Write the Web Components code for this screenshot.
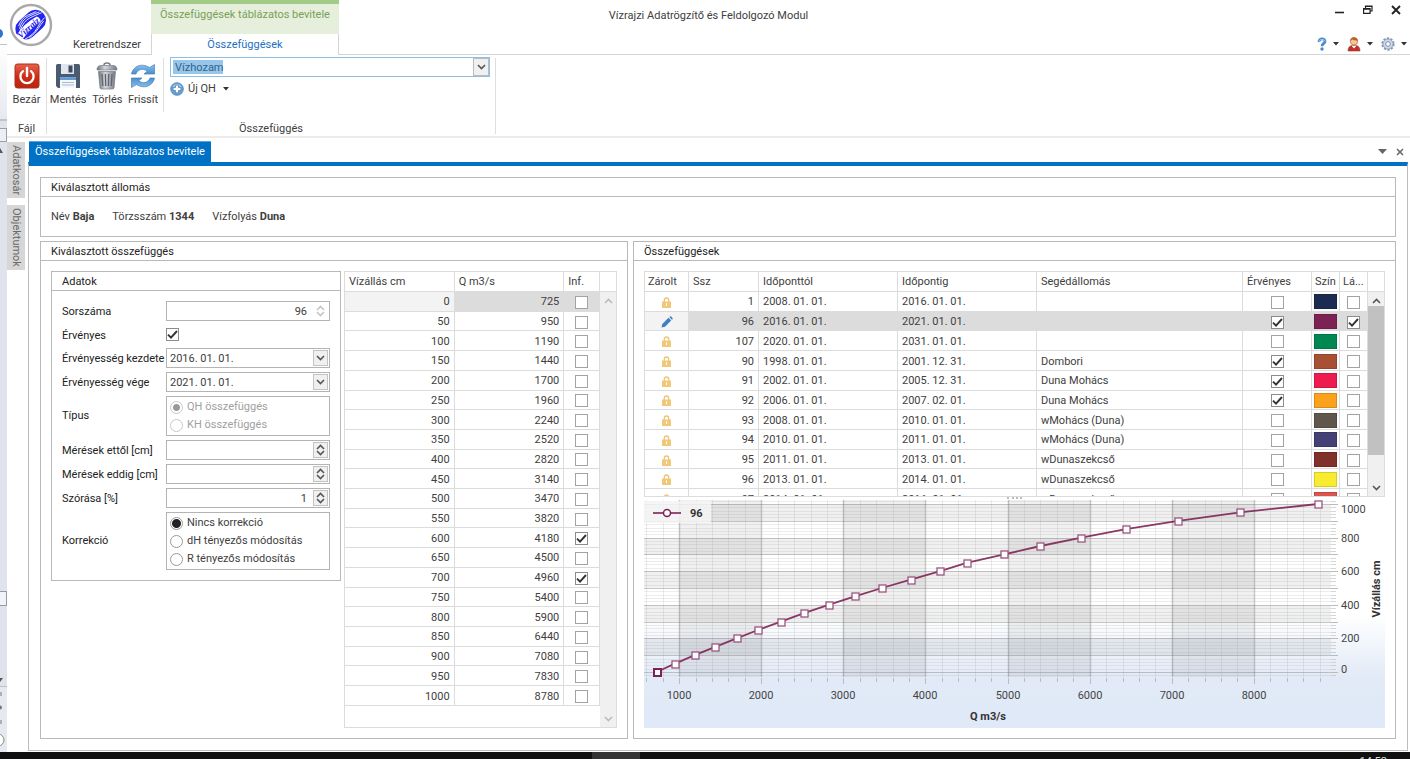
<!DOCTYPE html>
<html lang="hu">
<head>
<meta charset="utf-8">
<title>Vízrajzi Adatrögzítő és Feldolgozó Modul</title>
<style>
  html, body { margin: 0; background: #fff; }
  body { font: 11px/16px Roboto, "Open Sans", sans-serif; color: #404040; }
</style>
</head>
<body>
<app-window></app-window>

<script>
const BASE = `
  *, *::before, *::after { box-sizing: border-box; }
  button, input, select { font: inherit; color: inherit; margin: 0; }
  button { border: 0; background: none; padding: 0; cursor: default; }
  svg { display: block; flex: none; }
  input[type=checkbox] { appearance: none; width: 13px; height: 13px; border: 1px solid #a3a3a3; background: #fff center/11px 11px no-repeat; display: block; }
  input[type=checkbox]:checked { border-color: #8c8c8c; background-image: url("data:image/svg+xml,%3Csvg xmlns='http://www.w3.org/2000/svg' viewBox='0 0 11 11'%3E%3Cpath d='M1 5.6 4 8.6 10 2' fill='none' stroke='%23333' stroke-width='1.9'/%3E%3C/svg%3E"); }
`;
function define(name, css, html, setup) {
  customElements.define(name, class extends HTMLElement {
    constructor() {
      super();
      const root = this.attachShadow({ mode: "open" });
      root.innerHTML = `<style>${BASE}${css}</style>${typeof html === "function" ? html(this) : html}`;
    }
    connectedCallback() { if (setup) setup(this, this.shadowRoot); }
  });
}
const chevron = (dir, color = "#555") =>
  `<svg width="9" height="6" viewBox="0 0 9 6"><path d="${dir === "up" ? "M1 5 4.5 1.5 8 5" : "M1 1 4.5 4.5 8 1"}" fill="none" stroke="${color}" stroke-width="1.6"/></svg>`;
const caret = `<svg width="6" height="4" viewBox="0 0 6 4"><path d="M0 0h6L3 3.500z" fill="#333"/></svg>`;

/* ---------- icons ---------- */
const ICONS = {
  power: `<svg width="26" height="26" viewBox="0 0 26 26"><defs><linearGradient id="a" x2="0" y2="1"><stop stop-color="#e5644f"/><stop offset=".5" stop-color="#cf2d16"/><stop offset="1" stop-color="#b8270f"/></linearGradient></defs><rect x="1" y="1" width="24" height="24" rx="2.5" fill="url(#a)" stroke="#a8301c"/><path d="M9 8.2a6.6 6.6 0 1 0 8 0" fill="none" stroke="#fff" stroke-width="2.3" stroke-linecap="round"/><path d="M13 5v8" stroke="#fff" stroke-width="2.4" stroke-linecap="round"/></svg>`,
  save: `<svg width="26" height="26" viewBox="0 0 26 26"><path d="M1 2.5Q1 1 2.500 1H23.500Q25 1 25 2.500V25H3L1 23z" fill="#4c5a70"/><path d="M6 1h13v10H6z" fill="#dfe6ee"/><path d="M13.500 2.500h4v7h-4z" fill="#3e4b60"/><path d="M5 14.500h16V25H5z" fill="#f4f8fd"/><path d="M5 14.500h16v2.500H5z" fill="#5b9bd8"/><path d="M7 19.500h12M7 22h12" stroke="#a9b9cc"/></svg>`,
  trash: `<svg width="22" height="28" viewBox="0 0 22 28"><defs><linearGradient id="t"><stop stop-color="#6f747c"/><stop offset=".4" stop-color="#d5d8dc"/><stop offset="1" stop-color="#737881"/></linearGradient></defs><path d="M8 3q0-2 3-2t3 2" fill="none" stroke="#777d86" stroke-width="1.600"/><path d="M1 8Q1 3.500 5 3.500h12q4 0 4 4.500z" fill="url(#t)" stroke="#777d86" stroke-width=".7"/><path d="M2.500 9.500h17L18 26q0 1-2 1H6q-2 0-2-1z" fill="url(#t)" stroke="#777d86" stroke-width=".7"/><path d="M6 12l.8 12M9.400 12l.3 12M12.700 12l-.3 12M16 12l-.8 12" stroke="#60666f" stroke-width="1.300"/></svg>`,
  refresh: `<svg width="26" height="26" viewBox="0 0 26 26"><defs><linearGradient id="b" x2="0" y2="1"><stop stop-color="#8cc3ee"/><stop offset="1" stop-color="#4a8ccb"/></linearGradient></defs><g fill="url(#b)" stroke="#4583bf" stroke-width=".7"><path d="M1.500 11C3 3 12-.5 19.500 4.500L24.500 1.500V11H14l3.200-2.800C13 5 8 6 6 11z"/><path d="M1.500 11C3 3 12-.5 19.500 4.500L24.500 1.500V11H14l3.200-2.800C13 5 8 6 6 11z" transform="rotate(180 13 13)"/></g></svg>`,
  plus: `<svg width="14" height="14" viewBox="0 0 14 14"><circle cx="7" cy="7" r="6.300" fill="#69a2d6" stroke="#4580b7" stroke-width=".8"/><path d="M3 5a4.600 4.600 0 0 1 8 0" stroke="#a9cdee" stroke-width="1.500" fill="none"/><path d="M5.500 3.200h3v2.300h2.300v3H8.500v2.300h-3V8.500H3.200v-3h2.300z" fill="#fff" stroke="#41719f" stroke-width=".6"/></svg>`,
  help: `<svg width="10" height="14" viewBox="0 0 10 14"><path d="M2 5C1.500.9 8.500.9 8 4.500 7.800 6.500 5 6.500 5 9.300" fill="none" stroke="#4a8ac9" stroke-width="2.700"/><path d="M2.100 4.500C2 1.800 8 1.600 7.900 4.300" fill="none" stroke="#a5cdf0"/><circle cx="5" cy="12" r="1.700" fill="#4a8ac9"/></svg>`,
  user: `<svg width="14" height="16" viewBox="0 0 14 16"><path d="M1 15q0-5 4-5.500h4q4 .5 4 5.500z" fill="#c92c2c" stroke="#942" stroke-width=".6"/><path d="M4.500 9.800h5L7 12.500z" fill="#fff"/><circle cx="7" cy="5.300" r="3.700" fill="#f3c697" stroke="#a35a25" stroke-width=".6"/><path d="M3.200 5.500C2.800-.5 11 0 10.800 5 9 4 6 4.500 5 3.200 4.600 4 4 4.500 3.200 5.500z" fill="#b8622a"/></svg>`,
  gear: `<svg width="14" height="14" viewBox="0 0 14 14"><circle cx="7" cy="7" r="5.800" fill="none" stroke="#8496b4" stroke-width="1.700" stroke-dasharray="2.200 1.440"/><circle cx="7" cy="7" r="5" fill="#cdd8e9" stroke="#8294b3" stroke-width=".8"/><circle cx="7" cy="7" r="2.300" fill="#fff" stroke="#7f91b0"/></svg>`,
  lock: `<svg width="9" height="11" viewBox="0 0 9 11"><path d="M2.300 5V3.200a2.200 2.200 0 0 1 4.400 0V5" fill="none" stroke="#ecc678" stroke-width="1.300"/><path d="M0 4.500h9V11H0z" fill="#f1c877"/><path d="M4 6.300h1v2.700H4z" fill="#fff"/></svg>`,
  pencil: `<svg width="12" height="12" viewBox="0 0 12 12"><path d="M.5 11.500 1.300 8 7.500 1.800 10.200 4.500 4 10.700z" fill="#3f7fc1"/><path d="M8.300 1 9 .4q.6-.4 1.200.2L11.500 2q.5.600 0 1.200l-.6.600z" fill="#3f7fc1"/></svg>`,
  logo: `<svg width="44" height="44" viewBox="0 0 44 44"><circle cx="22" cy="22" r="20" fill="#fff" stroke="#a9a9a9" stroke-width="2.400"/><g transform="rotate(-42 22 22)"><rect x="5" y="11" width="34" height="21" rx="10.500" fill="#2226ee"/><g fill="none" stroke="#fff" stroke-width=".8"><path d="M11 17q8-5 15-3t11 4M12 14.500q8-4 14-2t9 3M10 19q9-5 16-3t12 4"/><path d="M8 28.500q9 2.500 16 0t13-3M12 30.500q8 .5 13-1t9-2"/></g><path d="M4.500 20Q18 16 32 19.500 34 24 31 26 20 24 6.500 27 4 24 4.500 20z" fill="#fff"/><text x="18" y="25.500" text-anchor="middle" font-family="Liberation Serif, serif" font-weight="bold" font-style="italic" font-size="9" fill="#1b22e8">Vízrajz</text></g></svg>`
};

/* ---------- title bar with ribbon tabs ---------- */
define("title-bar", `
  :host { display: grid; grid-template-columns: 1fr auto 1fr; height: 55px; border-bottom: 1px solid #d5d5d5; }
  .left { display: flex; align-items: flex-end; }
  .logo { align-self: flex-start; margin: 3px 12px 0 2px; }
  .tab { height: 18px; width: 84px; margin-right: 2px; }
  .context { width: 188px; border: solid #d5d5d5; border-width: 0 1px; margin-bottom: -1px; background: #fff; }
  .context div { height: 34px; margin: 0 -1px; background: #e5efdb; border-top: 4px solid #a3cb88; color: #7aa05a; text-align: center; padding-top: 3px; }
  .context button { display: block; width: 100%; height: 21px; padding-top: 1px; color: #1f6fbf; }
  .title { padding-top: 8px; }
  .right { display: flex; flex-direction: column; align-items: flex-end; justify-content: space-between; }
  .win { display: flex; gap: 18px; padding: 5px 9px 0 0; align-items: center; }
  .tools { display: flex; gap: 8px; padding: 0 3px 2px 0; }
  .tools button { display: flex; align-items: center; gap: 6px; height: 16px; }
`, `
  <div class="left">
    <div class="logo">${ICONS.logo}</div>
    <button class="tab">Keretrendszer</button>
    <div class="context"><div>Összefüggések táblázatos bevitele</div><button>Összefüggések</button></div>
  </div>
  <div class="title">Vízrajzi Adatrögzítő és Feldolgozó Modul</div>
  <div class="right">
    <div class="win">
      <button aria-label="Kis méret"><svg width="10" height="10" viewBox="0 0 10 10"><path d="M0 7.500h9" stroke="#222" stroke-width="1.600"/></svg></button>
      <button aria-label="Előző méret"><svg width="10" height="10" viewBox="0 0 10 10"><path d="M.6 3.600h6.500v4.800H.6zM2.500 3.400V1h6.500v5H7.300M2.500 1.500H9M.6 4.200h6.500" fill="none" stroke="#222" stroke-width="1.200"/></svg></button>
      <button aria-label="Bezárás"><svg width="10" height="10" viewBox="0 0 10 10"><path d="M1 1l8 8M9 1 1 9" stroke="#222" stroke-width="1.900"/></svg></button>
    </div>
    <div class="tools">
      <button aria-label="Súgó">${ICONS.help}${caret}</button>
      <button aria-label="Felhasználó">${ICONS.user}${caret}</button>
      <button aria-label="Beállítások">${ICONS.gear}${caret}</button>
    </div>
  </div>
`);

/* ---------- ribbon ---------- */
define("ribbon-button", `
  :host { display: block; }
  button { display: flex; flex-direction: column; align-items: center; width: 100%; }
  .icon { height: 33px; display: flex; align-items: center; }
`, el => `<button><span class="icon">${ICONS[el.getAttribute("icon")]}</span><slot></slot></button>`);

define("ribbon-bar", `
  :host { display: flex; height: 83px; border-bottom: 2px solid #ececec; }
  section { display: flex; flex-direction: column; justify-content: space-between; margin: 3px 0 2px; border-right: 1px solid #dedede; }
  .file { width: 40px; }
  .relation { width: 449px; }
  h2 { margin: 0; font: inherit; text-align: center; line-height: 10px; }
  .row { display: flex; }
  .buttons { display: flex; width: 117px; height: 54px; border-right: 1px solid #dedede; padding-right: 2px; }
  .buttons ribbon-button { flex: 1 1 auto; }
  .file ribbon-button, .buttons { padding-top: 1px; }
  .pick { padding-left: 6px; width: 326px; }
  .combo { display: flex; height: 20px; border: 1px solid #8dbfe6; position: relative; margin-top: -1px; }
  select { flex: 1; appearance: none; border: 2px solid #fff; border-right-width: 18px; padding: 1px 2px 0; color: #2e648e; line-height: 14px; outline: 0; border-radius: 0;
    background: linear-gradient(#97c6e9, #97c6e9) 0 0 / 50px 100% no-repeat #fff; }
  .drop { position: absolute; right: 0; top: 0; width: 16px; height: 18px; border: 1px solid #bcbcbc; background: #f0f0f0; display: grid; place-items: center; pointer-events: none; }
  .new { display: flex; align-items: center; gap: 4px; margin-top: 4px; }
  .new svg:last-child { margin-left: 3px; }
`, `
  <section class="file"><ribbon-button icon="power">Bezár</ribbon-button><h2>Fájl</h2></section>
  <section class="relation">
    <div class="row">
      <div class="buttons">
        <ribbon-button icon="save">Mentés</ribbon-button>
        <ribbon-button icon="trash">Törlés</ribbon-button>
        <ribbon-button icon="refresh">Frissít</ribbon-button>
      </div>
      <div class="pick">
        <div class="combo"><select aria-label="Összefüggés típusa"><option>Vízhozam</option></select><span class="drop">${chevron("down")}</span></div>
        <button class="new">${ICONS.plus}<span>Új QH</span>${caret}</button>
      </div>
    </div>
    <h2>Összefüggés</h2>
  </section>
`);

/* ---------- group box ---------- */
define("group-box", `
  :host { display: flex; flex-direction: column; border: 1px solid #b9b9b9; background: #fff; min-width: 0; }
  h3 { margin: 0; font: inherit; color: #222; height: 19px; line-height: 20px; padding-left: 10px; border-bottom: 1px solid #b9b9b9; }
  .body { flex: 1; display: flex; flex-direction: column; padding: 10px; min-height: 0; }
`, el => `<h3>${el.getAttribute("heading")}</h3><div class="body"><slot></slot></div>`);

/* ---------- editors ---------- */
define("field-row", `
  :host { display: grid; grid-template-columns: 104px 1fr; align-items: center; height: 20px; }
  :host([kind=check]) { height: 19px; }
  label { color: #222; white-space: nowrap; padding-top: 2px; }
  .box { display: flex; height: 20px; border: 1px solid #b4b4b4; padding: 1px; }
  input[type=text] { flex: 1; min-width: 0; width: 0; border: 0; padding: 2px 2px 0; outline: 0; background: none; }
  :host([kind=spin]) input, :host([kind=plain]) input { text-align: right; padding-right: 6px; }
  .btn { width: 15px; border: 1px solid #c3c3c3; background: #f0f0f0; display: flex; flex-direction: column; align-items: center; justify-content: space-evenly; }
  :host([kind=plain]) .btn { border-color: transparent; background: none; }
`, el => {
  const kind = el.getAttribute("kind"), label = el.getAttribute("label"), value = el.getAttribute("value") || "";
  const color = kind === "plain" ? "#c4c4c4" : "#555";
  if (kind === "check") return `<label for="f">${label}</label><input id="f" type="checkbox" checked>`;
  const buttons = kind === "date"
    ? `<button class="btn" aria-label="Lenyitás">${chevron("down")}</button>`
    : `<span class="btn"><button aria-label="Fel">${chevron("up", color)}</button><button aria-label="Le">${chevron("down", color)}</button></span>`;
  return `<label for="f">${label}</label><div class="box"><input id="f" type="text" value="${value}">${buttons}</div>`;
});

define("radio-row", `
  :host { display: block; }
  fieldset { display: grid; grid-template-columns: 104px 1fr; align-items: center; border: 0; margin: 0; padding: 0; color: #222; }
  .box { border: 1px solid #b4b4b4; padding: 1px 3px; color: #404040; }
  label { display: flex; align-items: center; gap: 4px; height: 18px; white-space: nowrap; }
  input { appearance: none; width: 13px; height: 13px; border: 1px solid #999; border-radius: 50%; background: #fff; }
  input:checked { background: radial-gradient(circle, #222 0 4px, #fff 5px); }
  :host([disabled]) .box { color: #a0a0a0; }
  :host([disabled]) input { border-color: #c8c8c8; }
  :host([disabled]) input:checked { background: radial-gradient(circle, #999 0 3px, #fff 4px); }
`, el => {
  const off = el.hasAttribute("disabled") ? "disabled" : "";
  return `<fieldset role="radiogroup" aria-label="${el.getAttribute("label")}"><span>${el.getAttribute("label")}</span><div class="box">` +
    el.getAttribute("options").split("|").map((o, i) => `<label><input type="radio" name="r" ${i ? "" : "checked"} ${off}>${o}</label>`).join("") +
    `</div></fieldset>`;
});

/* ---------- tables ---------- */
const GRID = `
  :host { display: flex; border: 1px solid #dcdcdc; overflow: hidden; min-width: 0; }
  .view { flex: 1; overflow: hidden; min-width: 0; }
  table { border-collapse: separate; border-spacing: 0; table-layout: fixed; width: 100%; }
  th, td { padding: 0 4px; line-height: 14px; border: solid #dcdcdc; border-width: 0 1px 1px 0; overflow: hidden; white-space: nowrap; text-overflow: ellipsis; text-align: left; font-weight: normal; }
  th { height: 20px; }
  td { padding-top: 2px; }
  td.n { text-align: right; }
  td input { margin: 0 auto; }
  tr.sel td { background: #dcdcdc; }
  tr.sel td:first-child { background: #f3f3f3; }
  .bar { width: 16px; display: flex; flex-direction: column; align-items: center; background: #f0f0f0; }
  .bar i { align-self: stretch; height: 20px; background: #fff; border-bottom: 1px solid #dcdcdc; margin-bottom: 6px; }
  .bar svg:last-child { margin-top: auto; margin-bottom: 5px; }
`;
const LEVELS = [0,50,100,150,200,250,300,350,400,450,500,550,600,650,700,750,800,850,900,950,1000];
const FLOWS = [725,950,1190,1440,1700,1960,2240,2520,2820,3140,3470,3820,4180,4500,4960,5400,5900,6440,7080,7830,8780];

define("level-table", GRID + `
  table { height: 434px; }
  .a { width: 43%; } .b { width: 43%; }
`, () => `
  <div class="view"><table>
    <colgroup><col class="a"><col class="b"><col></colgroup>
    <thead><tr><th>Vízállás cm</th><th>Q m3/s</th><th>Inf.</th></tr></thead>
    <tbody>${LEVELS.map((h, i) => `<tr class="${i ? "" : "sel"}"><td class="n">${h}</td><td class="n">${FLOWS[i]}</td><td><input type="checkbox" aria-label="Inf. ${h}" ${h === 600 || h === 700 ? "checked" : ""}></td></tr>`).join("")}</tbody>
  </table></div>
  <div class="bar"><i></i>${chevron("up", "#bbb")}${chevron("down", "#bbb")}</div>
`);

const CURVES = [
  [1, "2008. 01. 01.", "2016. 01. 01.", "", 0, "#1c2b52", 0],
  [96, "2016. 01. 01.", "2021. 01. 01.", "", 1, "#7d2255", 1],
  [107, "2020. 01. 01.", "2031. 01. 01.", "", 0, "#008752", 0],
  [90, "1998. 01. 01.", "2001. 12. 31.", "Dombori", 1, "#a94f33", 0],
  [91, "2002. 01. 01.", "2005. 12. 31.", "Duna Mohács", 1, "#ee1b50", 0],
  [92, "2006. 01. 01.", "2007. 02. 01.", "Duna Mohács", 1, "#fca11b", 0],
  [93, "2008. 01. 01.", "2010. 01. 01.", "wMohács (Duna)", 0, "#60564b", 0],
  [94, "2010. 01. 01.", "2011. 01. 01.", "wMohács (Duna)", 0, "#454075", 0],
  [95, "2011. 01. 01.", "2013. 01. 01.", "wDunaszekcső", 0, "#82302a", 0],
  [96, "2013. 01. 01.", "2014. 01. 01.", "wDunaszekcső", 0, "#f8ec31", 0],
  [97, "2014. 01. 01.", "2016. 01. 01.", "wDunaszekcső", 0, "#dc544c", 0]
];
define("curve-table", GRID + `
  :host { height: 226px; }
  table { height: 237px; }
  td svg { margin: 0 auto; }
  th:first-child { padding: 0 3px; }
  .c0 { width: 44px; } .c1 { width: 70px; } .c2, .c3 { width: 139px; } .c5 { width: 69px; } .c6, .c7 { width: 28px; }
  th:nth-child(7), th:nth-child(8) { padding: 0 3px; }
  td:nth-child(7) { padding: 1px 2px 0; }
  .swatch { height: 15px; border: 1px solid #0002; }
  .thumb { align-self: stretch; height: 149px; background: #c1c1c1; margin-top: 2px; }
`, () => `
  <div class="view"><table>
    <colgroup>${[0,1,2,3,4,5,6,7].map(n => `<col class="c${n}">`).join("")}</colgroup>
    <thead><tr><th>Zárolt</th><th>Ssz</th><th>Időponttól</th><th>Időpontig</th><th>Segédállomás</th><th>Érvényes</th><th>Szín</th><th>Lá...</th></tr></thead>
    <tbody>${CURVES.map(([n, from, to, st, ok, color, vis], i) => `<tr class="${i === 1 ? "sel" : ""}"><td>${i === 1 ? ICONS.pencil : ICONS.lock}</td><td class="n">${n}</td><td>${from}</td><td>${to}</td><td>${st}</td><td><input type="checkbox" aria-label="Érvényes" ${ok ? "checked" : ""}></td><td><div class="swatch" style="background:${color}"></div></td><td><input type="checkbox" aria-label="Látható" ${vis ? "checked" : ""}></td></tr>`).join("")}</tbody>
  </table></div>
  <div class="bar"><i></i>${chevron("up")}<div class="thumb"></div>${chevron("down")}</div>
`);

/* ---------- rating curve chart ---------- */
function drawChart(host, root) {
  const w = host.clientWidth, h = host.clientHeight;
  const right = w - 54, bottom = h - 51;
  const X = v => (v - 572) / 8367 * right;
  const Y = v => bottom - 5 - v / 1000 * (bottom - 9);
  const r = Math.round;
  let s = "";
  for (let v = 1000; v < 9000; v += 2000)
    s += `<rect x="${r(X(v))}" y="0" width="${r(X(v + 1000) - X(v))}" height="${bottom}" fill="#000" opacity=".06"/>`;
  for (let v = 100; v < 1000; v += 200)
    s += `<rect x="0" y="${r(Y(v + 100))}" width="${right}" height="${r(Y(v) - Y(v + 100))}" fill="#000" opacity=".06"/>`;
  for (let v = 600; v < 8900; v += 200) {
    const major = v % 1000 === 0, x = r(X(v)) + 0.5;
    s += `<path d="M${x} 0V${bottom}" stroke="${major ? "#777" : "#999"}" stroke-opacity="${major ? .4 : .2}" stroke-width="${major ? 1.5 : 1}"/>`;
    s += `<path d="M${x} ${bottom + 1}v${major ? 6 : 4}" stroke="#b5bcc6"/>`;
  }
  for (let v = -20; v <= 1020; v += 20) {
    const major = v % 100 === 0, y = r(Y(v)) + 0.5;
    s += `<path d="M0 ${y}H${right}" stroke="${major ? "#777" : "#999"}" stroke-opacity="${major ? .4 : .18}"/>`;
    s += `<path d="M${right} ${y}h${major ? 7 : 5}" stroke="#bbb" stroke-opacity="${major ? 1 : .6}"/>`;
  }
  s += `<rect x="0" y="1" width="67" height="22" fill="#f4f4f4" opacity=".85"/>`;
  s += `<path d="M9 13h28" stroke="#7d2255" stroke-width="1.600"/><circle cx="23" cy="13" r="3.500" fill="#fff" stroke="#7d2255" stroke-width="1.500"/>`;
  s += `<text x="46" y="17" class="b">96</text>`;
  const pts = LEVELS.map((l, i) => [X(FLOWS[i]), Y(l)]);
  s += `<polyline points="${pts.map(p => p.join()).join(" ")}" fill="none" stroke="#7d2255" stroke-width="1.800" stroke-opacity=".9"/>`;
  pts.forEach(([x, y], i) => s += `<rect x="${r(x) - 3}" y="${r(y) - 3}" width="7" height="7" fill="#fff" stroke="${i ? "#9c5580" : "#7d2255"}" stroke-width="${i ? 1.3 : 2}"/>`);
  for (let v = 1000; v < 9000; v += 1000) s += `<text x="${r(X(v))}" y="${h - 29}" text-anchor="middle">${v}</text>`;
  s += `<text x="${r(right / 2)}" y="${h - 8}" text-anchor="middle" class="b">Q m3/s</text>`;
  for (let v = 0; v <= 1000; v += 200) s += `<text x="${right + 10}" y="${r(Math.max(Y(v), 9) + (v ? 4 : 1))}">${v}</text>`;
  s += `<text transform="translate(${w - 5} ${r(bottom / 2)}) rotate(-90)" text-anchor="middle" class="b">Vízállás cm</text>`;
  root.querySelector("svg").innerHTML = s;
}
define("rating-chart", `
  :host { display: block; flex: 1; min-height: 226px; contain: size; background: linear-gradient(#fff 0 50%, #e2eaf7 78%, #dfe9f7); }
  svg { width: 100%; height: 100%; font-size: 11px; }
  text { fill: #444; } .b { font-weight: bold; fill: #333; }
`, `<svg role="img" aria-label="Vízhozamgörbe"></svg>`, (host, root) => {
  drawChart(host, root);
  new ResizeObserver(() => drawChart(host, root)).observe(host);
});

/* ---------- side pieces ---------- */
define("side-tabs", `
  :host { display: flex; flex-direction: column; gap: 7px; width: 18px; padding-top: 4px; }
  button { width: 18px; background: #d6d6d6; color: #6a6a6a; writing-mode: vertical-rl; padding: 3px 0; text-align: left; line-height: 18px; white-space: nowrap; }
`, `<button>Adatkosár</button><button>Objektumok</button>`);

define("back-window", `
  :host { display: flex; flex-direction: column; background: #dee3ec; overflow: hidden; }
  .top { height: 45px; background: #fff; border-bottom: 1px solid #b9c3d2; }
  .top svg { margin-top: 28px; }
  .pane { height: 76px; background: linear-gradient(#fff, #e6e9ef); border-bottom: 2px solid #c0c4cc; }
  .knob { height: 14px; margin-top: 7px; border: 1px solid #9a9ead; border-left: 0; background: #edeff5; }
  .arrow { height: 12px; margin-top: 5px; }
  .grow { flex: 1; }
  .foot { height: 66px; background: #e6e9f0; border-top: 1px solid #b9bfcc; display: flex; flex-direction: column; justify-content: space-around; }
  .mid { height: 15px; border: 1px solid #9297ab; border-left: 0; background: #f2f3f8; }
  .low { height: 72px; }
`, `
  <div class="top"><svg width="4" height="11" viewBox="0 0 4 11"><circle cx="-2" cy="5.500" r="5" fill="#2d74d0"/></svg></div>
  <div class="pane"></div><div class="knob"></div>
  <svg class="arrow" width="4" height="12" viewBox="0 0 4 12"><path d="M0 1l3 5H0z" fill="#555"/></svg>
  <div class="grow"></div><div class="mid"></div><div class="low"></div>
  <svg width="4" height="8" viewBox="0 0 4 8"><path d="M0 0h3L0 4z" fill="#555"/></svg>
  <div class="foot"><svg width="3" height="4"><path d="M0 1h2M0 3h2" stroke="#777"/></svg><svg width="3" height="5"><circle cx="0" cy="2.500" r="2" fill="#777"/></svg><svg width="3" height="4"><path d="M0 1h2M0 3h2" stroke="#777"/></svg><svg width="6" height="14"><circle cx="-2" cy="7" r="6" fill="#fff" stroke="#888"/></svg></div>
`);

define("task-bar", `
  :host { display: flex; justify-content: flex-end; height: 7px; background: linear-gradient(90deg, #101010 0 42%, #333 42% 45.400%, #101010 45.400%); overflow: hidden; color: #ddd; }
  span { margin: 3px 23px 0 0; line-height: 14px; }
`, `<span>14:52</span>`);

/* ---------- document area ---------- */
define("document-panel", `
  :host { display: flex; flex-direction: column; min-width: 0; padding: 3px 2px 1px 0; }
  .tabs { display: flex; justify-content: space-between; height: 21px; padding-left: 1px; }
  .tab { background: #0072c6; color: #fff; width: 182px; border-top: 1px solid #5aa7e0; }
  .tools { display: flex; align-items: center; gap: 9px; padding-right: 4px; }
  .page { flex: 1; display: flex; flex-direction: column; gap: 4px; border: 1px solid #bdbdbd; border-top: 4px solid #0072c6; padding: 11px; }
  .station { display: flex; gap: 18px; height: 19px; line-height: 20px; }
  .columns { flex: 1; display: grid; grid-template-columns: 588fr 763fr; gap: 5px; }
  .left { display: flex; flex: 1; gap: 3px; }
  .data { width: 290px; align-self: flex-start; }
  .fields { display: flex; flex-direction: column; gap: 4px; }
  level-table { flex: 1; }
  .grip { display: flex; justify-content: center; height: 3px; }
  .grip i { width: 15px; border-top: 2px dotted #bbb; }
`, `
  <div class="tabs">
    <button class="tab">Összefüggések táblázatos bevitele</button>
    <div class="tools">
      <button aria-label="Dokumentumok"><svg width="9" height="5" viewBox="0 0 9 5"><path d="M0 0h9L4.500 5z" fill="#666"/></svg></button>
      <button aria-label="Bezárás"><svg width="8" height="8" viewBox="0 0 8 8"><path d="M1 1l6 6M7 1 1 7" stroke="#666" stroke-width="1.500"/></svg></button>
    </div>
  </div>
  <div class="page">
    <group-box heading="Kiválasztott állomás"><div class="station"><span>Név <b>Baja</b></span><span>Törzsszám <b>1344</b></span><span>Vízfolyás <b>Duna</b></span></div></group-box>
    <div class="columns">
      <group-box heading="Kiválasztott összefüggés">
        <div class="left">
          <group-box class="data" heading="Adatok">
            <div class="fields">
              <field-row kind="plain" label="Sorszáma" value="96"></field-row>
              <field-row kind="check" label="Érvényes"></field-row>
              <field-row kind="date" label="Érvényesség kezdete" value="2016. 01. 01."></field-row>
              <field-row kind="date" label="Érvényesség vége" value="2021. 01. 01."></field-row>
              <radio-row disabled label="Típus" options="QH összefüggés|KH összefüggés"></radio-row>
              <field-row kind="spin" label="Mérések ettől [cm]"></field-row>
              <field-row kind="spin" label="Mérések eddig [cm]"></field-row>
              <field-row kind="spin" label="Szórása [%]" value="1"></field-row>
              <radio-row label="Korrekció" options="Nincs korrekció|dH tényezős módosítás|R tényezős módosítás"></radio-row>
            </div>
          </group-box>
          <level-table></level-table>
        </div>
      </group-box>
      <group-box heading="Összefüggések">
        <curve-table></curve-table>
        <div class="grip"><i></i></div>
        <rating-chart></rating-chart>
      </group-box>
    </div>
  </div>
`);

define("app-window", `
  :host { display: grid; grid-template: auto auto 1fr auto / 7px 1fr; min-height: 100vh; }
  back-window { grid-row: 1 / 4; }
  .work { display: flex; gap: 3px; min-width: 0; }
  document-panel { flex: 1; }
  task-bar { grid-column: 1 / 3; }
`, `
  <back-window></back-window>
  <title-bar></title-bar>
  <ribbon-bar></ribbon-bar>
  <div class="work"><side-tabs></side-tabs><document-panel></document-panel></div>
  <task-bar></task-bar>
`);
</script>
</body>
</html>
